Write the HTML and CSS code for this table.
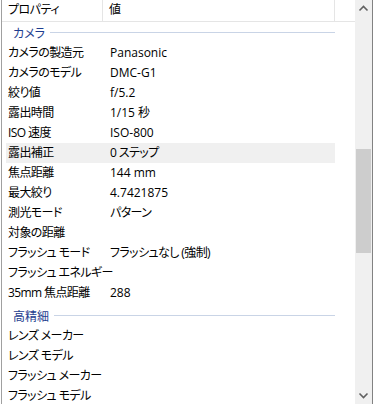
FILE: index.html
```html
<!DOCTYPE html>
<html lang="ja">
    <head>
        <meta charset="utf-8">
        <title>プロパティ</title>
        <link rel="stylesheet" href="styles.css">
    </head>
    <body>
        <div class="frame">
            <div class="list">
                <div class="list-head">
                    <div class="head-name">プロパティ</div>
                    <div class="head-value">値</div>
                    <div class="head-rest"></div>
                </div>

                <div class="group">
                    <span class="group-title">カメラ</span>
                    <span class="group-line"></span>
                </div>
                <div class="prop"><span class="name">カメラの製造元</span><span class="value">Panasonic</span></div>
                <div class="prop"><span class="name">カメラのモデル</span><span class="value">DMC-G1</span></div>
                <div class="prop"><span class="name">絞り値</span><span class="value">f/5.2</span></div>
                <div class="prop"><span class="name">露出時間</span><span class="value">1/15 秒</span></div>
                <div class="prop"><span class="name">ISO 速度</span><span class="value">ISO-800</span></div>
                <div class="prop hover"><span class="name">露出補正</span><span class="value jp">0 ステップ</span></div>
                <div class="prop"><span class="name">焦点距離</span><span class="value">144 mm</span></div>
                <div class="prop"><span class="name">最大絞り</span><span class="value">4.7421875</span></div>
                <div class="prop"><span class="name">測光モード</span><span class="value jp">パターン</span></div>
                <div class="prop"><span class="name">対象の距離</span><span class="value"></span></div>
                <div class="prop"><span class="name">フラッシュ モード</span><span class="value jp">フラッシュなし (強制)</span></div>
                <div class="prop"><span class="name">フラッシュ エネルギー</span><span class="value"></span></div>
                <div class="prop"><span class="name">35mm 焦点距離</span><span class="value">288</span></div>

                <div class="group group-next">
                    <span class="group-title">高精細</span>
                    <span class="group-line"></span>
                </div>
                <div class="prop"><span class="name">レンズ メーカー</span><span class="value"></span></div>
                <div class="prop"><span class="name">レンズ モデル</span><span class="value"></span></div>
                <div class="prop"><span class="name">フラッシュ メーカー</span><span class="value"></span></div>
                <div class="prop"><span class="name">フラッシュ モデル</span><span class="value"></span></div>
            </div>

            <div class="scrollbar">
                <svg class="arrow" width="17" height="17" viewBox="0 0 17 17">
                    <path d="M4.5 10.5 L8.5 6.5 L12.5 10.5" fill="none" stroke="#606060" stroke-width="1.6"/>
                </svg>
                <div class="track">
                    <div class="thumb"></div>
                </div>
                <svg class="arrow" width="17" height="17" viewBox="0 0 17 17">
                    <path d="M4.5 6.5 L8.5 10.5 L12.5 6.5" fill="none" stroke="#606060" stroke-width="1.6"/>
                </svg>
            </div>
        </div>
    </body>
</html>
```

FILE: styles.css
```css
body {
    margin: 0;
    background: #fff;
    font-family: "Open Sans", "Noto Sans CJK JP", sans-serif;
    font-size: 12px;
    color: #000;
}

.frame {
    display: flex;
    height: 404px;
    width: 370px;
    margin-left: 1px;
    border-left: 1px solid #a0a0a0;
    border-right: 1px solid #828282;
    overflow: hidden;
}

.list {
    flex: 1;
    min-width: 0;
}

/* 表の見出し */
.list-head {
    display: flex;
    height: 21px;
    border-bottom: 1px solid #e5e5e5;
    line-height: 20px;
    font-feature-settings: "palt";
}

.head-name {
    width: 94px;
    padding-left: 6px;
    border-right: 1px solid #e5e5e5;
    letter-spacing: -0.5px;
}

.head-value {
    width: 225px;
    padding-left: 6px;
    border-right: 1px solid #e5e5e5;
}

.head-rest {
    flex: 1;
}

/* グループの見出し: 文字の後ろに線を引く */
.group {
    display: flex;
    align-items: center;
    height: 21px;
    padding-left: 11px;
    width: 322px;
}

.group-next {
    margin-top: 2px;
}

.group-title {
    color: #1e3d8f;
    font-feature-settings: "palt";
}

.group-line {
    flex: 1;
    height: 1px;
    margin-left: 5px;
    background: #c9d4e6;
}

.prop {
    display: flex;
    height: 20px;
    line-height: 20px;
    width: 329px;
    margin-left: 4px;
    white-space: nowrap;
    font-feature-settings: "palt";
}

.prop.hover {
    background: #f0f0f0;
}

/* かな文字は少し詰める */
.name {
    width: 102px;
    padding-left: 2px;
    letter-spacing: -0.6px;
}

.value {
    flex: 1;
}

.value.jp {
    letter-spacing: -0.6px;
}

/* 縦スクロールバー */
.scrollbar {
    display: flex;
    flex-direction: column;
    width: 17px;
    background: #f0f0f0;
}

.arrow {
    display: block;
    flex: none;
}

.track {
    flex: 1;
    padding-top: 132px;
}

.thumb {
    height: 104px;
    margin: 0 1px;
    background: #cdcdcd;
}
```
